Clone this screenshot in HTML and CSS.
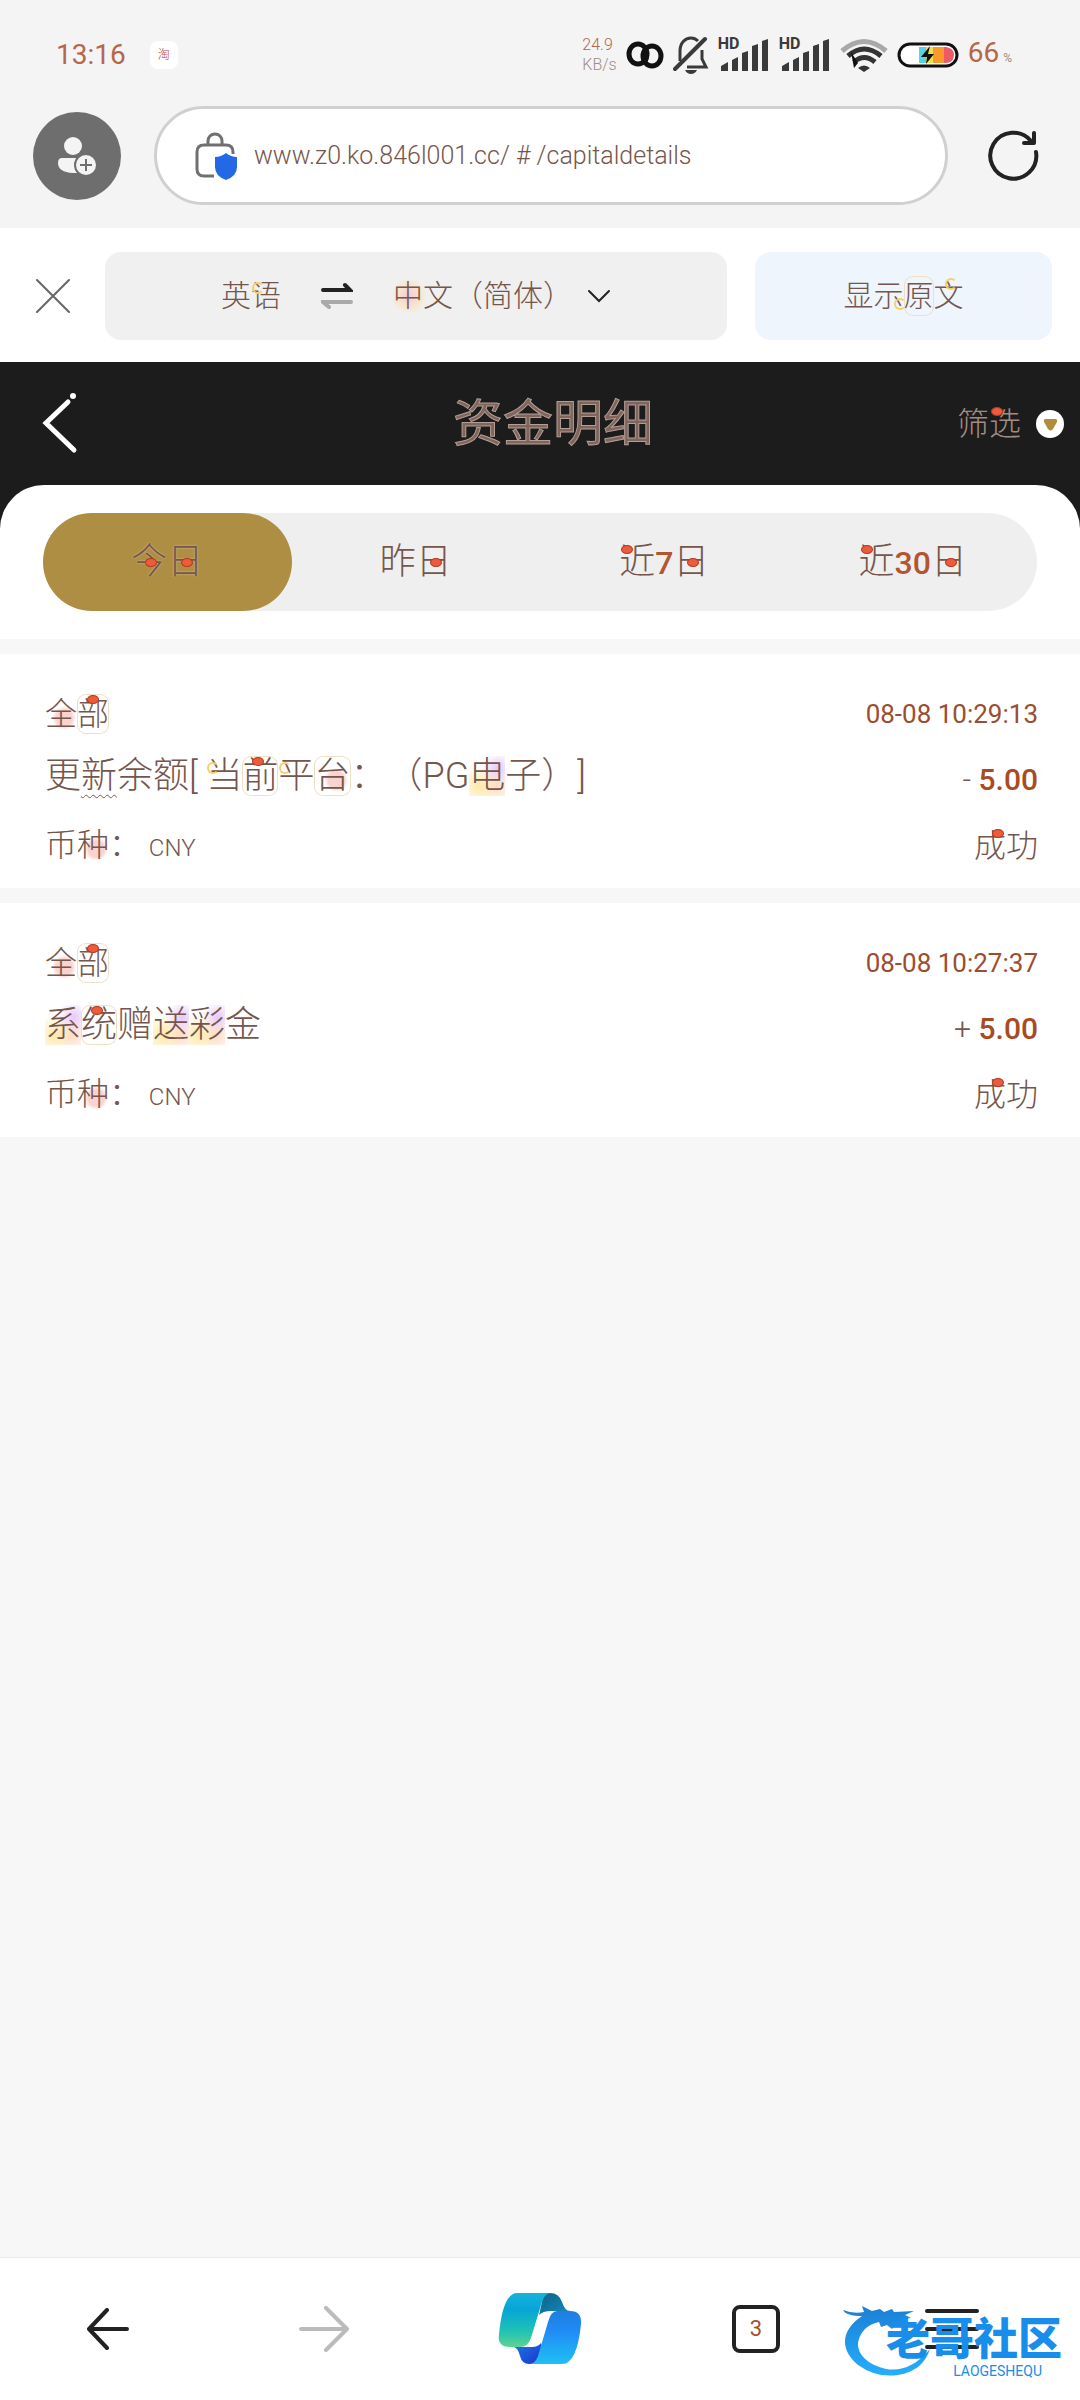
FILE: index.html
```html
<!DOCTYPE html>
<html lang="zh-CN">
<head>
    <meta charset="UTF-8">
    <meta name="viewport" content="width=device-width, initial-scale=1.0">
    <title>资金明细</title>
    <link rel="stylesheet" href="styles.css">
</head>
<body>
    <div class="browser-top">
        <div class="status-bar">
            <span class="time">13:16</span>
            <span class="app-badge">淘</span>
            <div class="status-icons">
                <div class="net-speed"><span>24.9</span><span class="unit">KB/s</span></div>
                <svg width="38" height="28" viewBox="0 0 38 28" fill="none" stroke="#111" stroke-width="5">
                    <ellipse cx="12" cy="13" rx="9" ry="10"/>
                    <ellipse cx="26" cy="15" rx="9" ry="10"/>
                    <path d="M17 9c4 3 5 8 2 12" stroke-width="4"/>
                </svg>
                <svg class="bell" width="36" height="38" viewBox="0 0 36 38" fill="none" stroke="#3a3a3a" stroke-width="4">
                    <path d="M2 33L32 3" stroke-linecap="round"/>
                    <path d="M7 25V15C7 7 12 2 18 2q4 0 7 3M29 14v9l4 8H14" stroke-width="3"/>
                    <path d="M12 34h12q-2 4-6 4t-6-4z" fill="#3a3a3a" stroke="none"/>
                </svg>
                <div class="signal">
                    <span>HD</span>
                    <svg width="52" height="34" viewBox="0 0 52 34" fill="#3a3a3a">
                        <path d="M3 33v-5l7-4v9zM14 33V22l6-3v14zM24 33V15l6-2v20zM34 33V8l6-2v27zM44 33V3l6-2v32z"/>
                    </svg>
                </div>
                <div class="signal">
                    <span>HD</span>
                    <svg width="52" height="34" viewBox="0 0 52 34" fill="#3a3a3a">
                        <path d="M3 33v-5l7-4v9zM14 33V22l6-3v14zM24 33V15l6-2v20zM34 33V8l6-2v27zM44 33V3l6-2v32z"/>
                    </svg>
                </div>
                <svg class="wifi" width="48" height="34" viewBox="0 0 48 34" fill="none" stroke-width="5" stroke="#333">
                    <path d="M2 13Q24-6 46 13" stroke="#a9a9a9"/>
                    <path d="M8 18q16-14 33 0M14 24q10-9 21 0"/>
                    <path d="M18 30q6-5 12 0l-6 4z" fill="#333" stroke="none"/>
                    <path d="M11 14l3 16 4-5z" fill="#111" stroke="none"/>
                </svg>
                <svg width="62" height="28" viewBox="0 0 62 28">
                    <rect x="2" y="3" width="58" height="22" rx="11" fill="#fff" stroke="#111" stroke-width="3"/>
                    <path d="M22 6h7v16h-7z" fill="#5bd3e6"/>
                    <path d="M29 6h7v16h-7z" fill="#f2e053"/>
                    <path d="M36 6h11v16H36z" fill="#fb9a2c"/>
                    <path d="M47 6h2q8 1 8 8t-8 8h-2z" fill="#ee5a68"/>
                    <path d="M33 5l-9 11h6l-1 7 8-10h-6z" fill="#111"/>
                </svg>
                <span class="battery-level">66<small>%</small></span>
            </div>
        </div>
        <div class="address-row">
            <button class="profile" aria-label="登录">
                <svg width="42" height="42" viewBox="0 0 42 42">
                    <circle cx="17" cy="11" r="9" fill="#f4f4f4"/>
                    <path d="M6 23h22v15H17Q2 37 2 28q0-5 4-5z" fill="#f4f4f4"/>
                    <circle cx="30" cy="30" r="11" fill="#f4f4f4" stroke="#6e6e6e" stroke-width="2"/>
                    <path d="M30 24v12M24 30h12" stroke="#6e6e6e" stroke-width="2"/>
                </svg>
            </button>
            <div class="address-bar">
                <svg width="43" height="48" viewBox="0 0 43 48" fill="none">
                    <path d="M13 13V9c0-4 3-7 7-7s7 3 7 7v4M19 44H9q-7 0-7-7V20q0-7 7-7h22q7 0 7 7v2" stroke="#707070" stroke-width="3"/>
                    <path d="M31 21q5 4 11 4v10q0 9-11 13Q20 44 20 35V25q6 0 11-4z" fill="#2369e6"/>
                </svg>
                <input class="url" type="text" aria-label="网址" value="www.z0.ko.846l001.cc/ # /capitaldetails">
            </div>
            <button class="reload" aria-label="刷新">
                <svg width="52" height="52" viewBox="0 0 52 52" fill="none" stroke="#222" stroke-width="4" stroke-linecap="round" stroke-linejoin="round">
                    <path d="M48 22A23 23 0 1 1 43 11M46 3v10H36"/>
                </svg>
            </button>
        </div>
    </div>

    <div class="translate-bar">
        <button class="close" aria-label="关闭">
            <svg width="34" height="34" viewBox="0 0 34 34" stroke="#666" stroke-width="2" stroke-linecap="round">
                <path d="M1 1l32 32M33 1L1 33"/>
            </svg>
        </button>
        <div class="languages">
            <span>英<span class="moon moon-left">语</span></span>
            <svg width="32" height="28" viewBox="0 0 32 28" fill="none" stroke-width="4" stroke-linecap="round">
                <path d="M2 8h27l-5-5" stroke="#222"/>
                <path d="M30 20H2l6 5" stroke="#aaa"/>
            </svg>
            <label class="target">
                <select aria-label="目标语言"><option>中文（简体）</option></select>
                <svg width="24" height="14" viewBox="0 0 24 14" fill="none" stroke="#222" stroke-width="2" stroke-linecap="round">
                    <path d="M2 2l10 10L22 2"/>
                </svg>
            </label>
        </div>
        <button class="show-original">显<span class="moon moon-low">示</span><span class="sticker">原</span><span class="moon">文</span></button>
    </div>

    <header class="page-header">
        <button class="back" aria-label="返回">
            <svg width="36" height="62" viewBox="0 0 36 62" fill="none" stroke="#fff" stroke-width="5" stroke-linecap="round">
                <path d="M26 9L4 30l28 27"/>
                <circle cx="31" cy="3" r="3" fill="#fff" stroke="none"/>
            </svg>
        </button>
        <h1>资金明细</h1>
        <button class="filter">
            <span>筛<span class="heart">选</span></span>
            <svg width="28" height="28" viewBox="0 0 28 28">
                <circle cx="14" cy="14" r="14" fill="#fff"/>
                <path d="M10 9h9q3 0 2 3l-4 7q-2 3-5 0l-4-7q-1-3 2-3z" fill="#b18c3c"/>
            </svg>
        </button>
    </header>

    <main>
        <nav class="tabs-card">
            <div class="tabs">
                <button class="tab active"><span class="heart heart-mid">今</span><span class="heart heart-mid">日</span></button>
                <button class="tab">昨<span class="heart heart-mid">日</span></button>
                <button class="tab"><span class="heart">近</span><span class="num">7</span><span class="heart heart-mid">日</span></button>
                <button class="tab"><span class="heart">近</span><span class="num">30</span><span class="heart heart-mid">日</span></button>
            </div>
        </nav>

        <section class="record">
            <div class="row">
                <span class="type"><span class="blush">全</span><span class="sticker heart">部</span></span>
                <time class="date">08-08 10:29:13</time>
            </div>
            <div class="row row-main">
                <span class="desc">更<span class="wave">新</span>余额[ <span class="moon moon-left">当</span><span class="sticker heart">前</span><span class="moon moon-left">平</span><span class="sticker blush">台</span>：（PG<span class="rainbow">电</span>子）]</span>
                <span class="amount"><i>-</i> 5.00</span>
            </div>
            <div class="row">
                <span class="currency">币<span class="blush">种</span>： <span class="code">CNY</span></span>
                <span class="state"><span class="heart heart-right">成</span>功</span>
            </div>
        </section>

        <section class="record">
            <div class="row">
                <span class="type"><span class="blush">全</span><span class="sticker heart">部</span></span>
                <time class="date">08-08 10:27:37</time>
            </div>
            <div class="row row-main">
                <span class="desc"><span class="rainbow">系</span><span class="sticker heart">统</span>赠<span class="rainbow">送</span><span class="rainbow">彩</span>金</span>
                <span class="amount"><i>+</i> 5.00</span>
            </div>
            <div class="row">
                <span class="currency">币<span class="blush">种</span>： <span class="code">CNY</span></span>
                <span class="state"><span class="heart heart-right">成</span>功</span>
            </div>
        </section>
    </main>

    <footer class="bottom-nav">
        <button aria-label="后退">
            <svg width="42" height="42" viewBox="0 0 42 42" fill="none" stroke="#222" stroke-width="4" stroke-linecap="round" stroke-linejoin="round">
                <path d="M40 21H2M20 2L2 21l18 19"/>
            </svg>
        </button>
        <button aria-label="前进">
            <svg width="50" height="46" viewBox="0 0 50 46" fill="none" stroke="#bbb" stroke-width="4" stroke-linecap="round" stroke-linejoin="round">
                <path d="M2 23h46M27 2l21 21-21 21"/>
            </svg>
        </button>
        <button aria-label="Copilot">
            <svg width="84" height="74" viewBox="0 0 84 74">
                <defs>
                    <linearGradient id="leaf" x1="0" y1="0" x2="0" y2="1">
                        <stop offset="0" stop-color="#16b4da"/>
                        <stop offset=".3" stop-color="#06a5d8"/>
                        <stop offset=".7" stop-color="#1fc2b4"/>
                        <stop offset="1" stop-color="#5ed392"/>
                    </linearGradient>
                    <linearGradient id="leaf2" x1="0" y1="0" x2="0" y2="1">
                        <stop offset="0" stop-color="#1e7fe0"/>
                        <stop offset=".35" stop-color="#2189f4"/>
                        <stop offset="1" stop-color="#1fc0f4"/>
                    </linearGradient>
                    <linearGradient id="foldTop" x1="0" y1="0" x2="1" y2="1">
                        <stop offset="0" stop-color="#0b6284"/>
                        <stop offset="1" stop-color="#168bc2"/>
                    </linearGradient>
                    <linearGradient id="foldBottom" x1="0" y1="0" x2="1" y2="1">
                        <stop offset="0" stop-color="#1d78ea"/>
                        <stop offset="1" stop-color="#1a33c8"/>
                    </linearGradient>
                </defs>
                <path d="M46 1h6q9 0 12 9 3 9 8 9H53q-8 0-12 4z" fill="url(#foldTop)"/>
                <path d="M16 55h18q6 0 9-4l2 8-7 13h-7q-7 0-9-8-2-8-6-9z" fill="url(#foldBottom)"/>
                <path d="M19 1h34q-7 0-10 12L33 46q-3 9-11 9H12Q-1 55 1 42 5 1 19 1z" fill="url(#leaf)"/>
                <path d="M59 19h13q12 0 11 13-4 40-19 40H31q6 0 9-8l10-34q3-11 9-11z" fill="url(#leaf2)"/>
            </svg>
        </button>
        <button aria-label="标签页"><span class="tab-count">3</span></button>
        <button class="menu" aria-label="菜单">
            <svg width="54" height="40" viewBox="0 0 54 40" stroke="#222" stroke-width="4" stroke-linecap="round">
                <path d="M2 2h50M2 20h50M2 38h50"/>
            </svg>
        </button>
        <div class="watermark">
            <svg width="90" height="76" viewBox="0 0 90 76">
                <defs>
                    <linearGradient id="dragon" x1="0" y1="0" x2="0" y2="1">
                        <stop offset="0" stop-color="#1b7fd6"/>
                        <stop offset="1" stop-color="#25aefb"/>
                    </linearGradient>
                </defs>
                <path fill="url(#dragon)" d="M1 8q10 4 21 2l-2-6 10 5 8-2 4 3 8-3 2 3 20-1-9 4 6 3-7 1 6 4-9-1 4 4-10-1-3 4-5-4-6 2-2-5q-9 2-14 7C9 42 16 60 44 67q24 4 44-20-7 22-32 26Q34 76 16 63C-2 48-2 29 20 14 10 14 3 12 1 8z"/>
            </svg>
            <div class="watermark-text">
                <strong>老哥社区</strong>
                <span>LAOGESHEQU</span>
            </div>
        </div>
    </footer>
</body>
</html>
```
FILE: styles.css
```css
* {
    box-sizing: border-box;
}
body {
    margin: 0;
    min-height: 100vh;
    display: flex;
    flex-direction: column;
    background: #f7f7f7;
    color: #75564c;
    font-family: Roboto, "Noto Sans CJK SC", sans-serif;
    font-weight: 300;
    font-size: 32px;
    line-height: 40px;
}
button, input, select {
    font: inherit;
    color: inherit;
    border: none;
    background: none;
    padding: 0;
    margin: 0;
}
button {
    cursor: pointer;
}
svg {
    display: block;
    flex-shrink: 0;
}

/* status bar and address bar */
.browser-top {
    background: #f4f4f4;
    padding-bottom: 23px;
}
.status-bar {
    display: flex;
    align-items: center;
    height: 106px;
    padding: 4px 68px 0 56px;
    color: #b5674b;
}
.time {
    font-size: 28px;
    font-weight: 400;
}
.app-badge {
    width: 28px;
    height: 28px;
    margin-left: 24px;
    border-radius: 8px;
    background: #fff;
    color: #b94a50;
    font-size: 12px;
    line-height: 28px;
    text-align: center;
}
.status-icons {
    display: flex;
    align-items: center;
    gap: 9px;
    margin-left: auto;
}
.net-speed {
    display: flex;
    flex-direction: column;
    font-size: 16px;
    line-height: 20px;
}
.unit {
    color: #a08c86;
}
.signal {
    position: relative;
}
.signal span {
    position: absolute;
    left: 0;
    top: 0;
    color: #3a3a3a;
    font-size: 16px;
    font-weight: 700;
    line-height: 12px;
}
.battery-level {
    font-size: 28px;
    font-weight: 400;
}
.battery-level small {
    margin-left: 4px;
    color: #a08c86;
    font-size: 12px;
}
.address-row {
    display: flex;
    align-items: center;
    padding: 0 40px 0 33px;
}
.profile {
    display: flex;
    align-items: center;
    justify-content: center;
    width: 88px;
    height: 88px;
    border-radius: 50%;
    background: #6e6e6e;
}
.address-bar {
    flex: 1;
    display: flex;
    align-items: center;
    gap: 16px;
    height: 99px;
    margin: 0 40px 0 33px;
    padding: 0 38px;
    border: 3px solid #d0d0d0;
    border-radius: 50px;
    background: #fff;
}
.url {
    flex: 1;
    min-width: 0;
    font-size: 25px;
    outline: none;
}

/* translate bar */
.translate-bar {
    display: flex;
    align-items: center;
    height: 134px;
    padding: 2px 28px 0 36px;
    background: #fff;
    font-size: 30px;
}
.languages {
    flex: 1;
    display: flex;
    align-items: center;
    justify-content: center;
    gap: 40px;
    height: 88px;
    margin: 0 28px 0 35px;
    border-radius: 16px;
    background: #f0f0f0;
}
.target {
    display: flex;
    align-items: center;
    gap: 14px;
}
.target select {
    appearance: none;
    outline: none;
    background: radial-gradient(circle at 16px 20px, #f3c8dc, rgba(253, 226, 190, 0.7) 12px, transparent 18px);
}
.show-original {
    width: 297px;
    height: 88px;
    border-radius: 16px;
    background: #eef5fc;
}

/* page header */
.page-header {
    display: grid;
    grid-template-columns: 1fr auto 1fr;
    align-items: center;
    height: 167px;
    margin-bottom: -44px;
    padding: 0 16px 44px 42px;
    background: #1c1c1c;
    color: #80655d;
}
.page-header h1 {
    margin: 0;
    font-size: 50px;
    font-weight: 400;
    line-height: 60px;
    -webkit-text-stroke: 1px #b39d94;
}
.back {
    justify-self: start;
}
.filter {
    display: flex;
    align-items: center;
    justify-self: end;
    gap: 15px;
    color: #a18c84;
}

/* day tabs */
.tabs-card {
    padding: 28px 43px;
    border-radius: 44px 44px 0 0;
    background: #fff;
}
.tabs {
    display: grid;
    grid-template-columns: repeat(4, 1fr);
    border-radius: 49px;
    background: #efefef;
}
.tab {
    height: 98px;
    border-radius: 49px;
    font-size: 36px;
}
.tab.active {
    background: #ae8e43;
    text-shadow: 0 0 2px #dcc9a5;
}
.num {
    color: #b4552f;
    font-size: 32px;
    font-weight: 500;
}

/* records */
.record {
    margin-top: 15px;
    padding: 36px 42px 18px 45px;
    background: #fff;
}
.row {
    display: flex;
    justify-content: space-between;
    align-items: center;
    height: 48px;
}
.row-main {
    height: 84px;
}
.desc {
    padding-bottom: 8px;
    font-size: 36px;
    text-spacing-trim: space-all;
}
.date {
    color: #9c4d2e;
    font-size: 26px;
    font-weight: 400;
}
.amount {
    color: #a94b22;
    font-size: 30px;
    font-weight: 500;
}
.amount i {
    color: #75564c;
    font-style: normal;
    font-weight: 300;
}
.code {
    font-size: 24px;
}

/* little drawings around the characters */
.heart, .moon, .blush, .sticker, .wave, .rainbow {
    position: relative;
    display: inline-block;
}
.heart::before {
    content: "";
    position: absolute;
    left: 2px;
    top: 3px;
    width: 10px;
    height: 7px;
    border-radius: 50%;
    background: #ee5b3b;
    border: 1px solid #b23a22;
}
.heart-mid::before {
    left: 14px;
    top: 16px;
}
.heart-right::before {
    left: 18px;
}
.sticker.heart::before {
    left: 10px;
    top: 1px;
}
.moon::after {
    content: "";
    position: absolute;
    left: 11px;
    top: 2px;
    width: 8px;
    height: 8px;
    border-radius: 50%;
    border: 2px solid #f7cf6a;
    border-right-color: transparent;
}
.moon-left::after {
    left: 1px;
    top: 6px;
}
.moon-low::after {
    left: 20px;
    top: 22px;
}
.sticker {
    border-radius: 9px;
    box-shadow: inset 0 0 0 1px #eedfc6;
}
.blush {
    background: radial-gradient(circle at 60% 60%, #fad3cf 8px, transparent 12px);
}
.rainbow {
    background: radial-gradient(circle at 80% 30%, #e7c8fa, transparent 40%), radial-gradient(circle at 25% 75%, #fde9a6, transparent 50%), radial-gradient(circle at 75% 75%, #ffd9c4, transparent 50%);
}
.wave {
    text-decoration: underline wavy 1px #75564c;
    text-underline-offset: 6px;
}

/* browser bottom bar */
.bottom-nav {
    position: relative;
    display: grid;
    grid-template-columns: repeat(5, 1fr);
    height: 143px;
    margin-top: auto;
    border-top: 1px solid #ebebeb;
    background: #fff;
}
.bottom-nav button {
    display: flex;
    align-items: center;
    justify-content: center;
}
.bottom-nav .menu {
    padding-right: 40px;
}
.tab-count {
    width: 48px;
    height: 48px;
    border: 4px solid #222;
    border-radius: 8px;
    color: #a4522f;
    font-size: 22px;
    font-weight: 400;
}
.watermark {
    position: absolute;
    right: 18px;
    bottom: 22px;
    display: flex;
    color: #188de9;
    pointer-events: none;
}
.watermark-text {
    display: flex;
    flex-direction: column;
    align-items: flex-end;
    margin: 14px 0 0 -46px;
}
.watermark-text strong {
    font-size: 44px;
    font-weight: 900;
    line-height: 48px;
}
.watermark-text span {
    margin-right: 20px;
    font-size: 14px;
    font-weight: 400;
    line-height: 14px;
}
```
